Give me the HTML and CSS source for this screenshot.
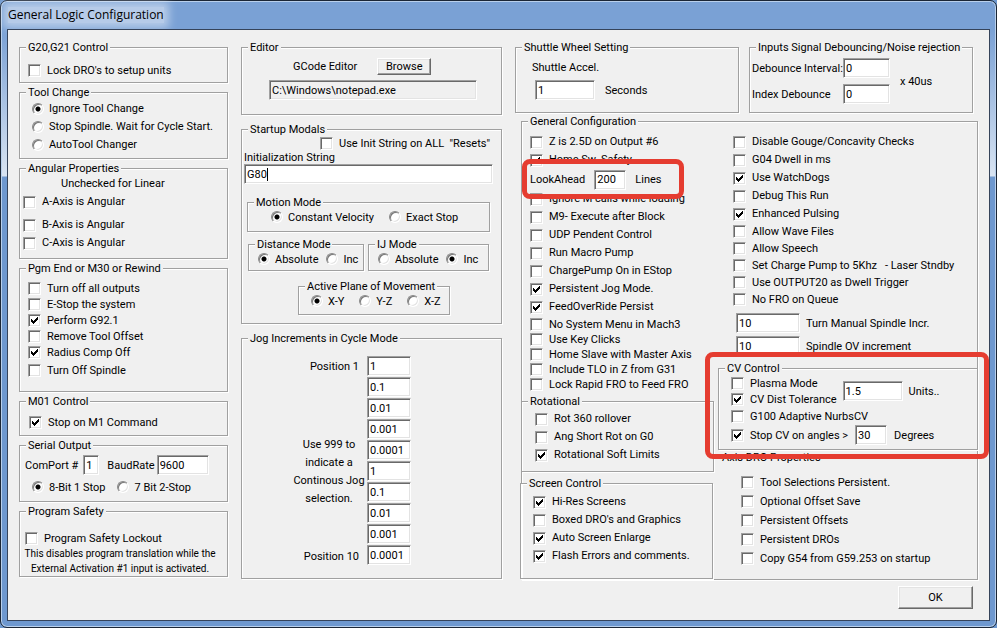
FILE: index.html
```html
<!DOCTYPE html>
<html lang="en">
<head>
    <meta charset="utf-8">
    <title>General Logic Configuration</title>
    <link rel="stylesheet" href="styles.css">
</head>
<body>
    <div class="window">
        <header class="titlebar">
            <h1>General Logic Configuration</h1>
        </header>

        <form class="client">
            <!-- Left column -->
            <div class="column">
                <fieldset class="units">
                    <legend>G20,G21 Control</legend>
                    <label class="check"><input type="checkbox">Lock DRO's to setup units</label>
                </fieldset>

                <fieldset class="tool-change roomy">
                    <legend>Tool Change</legend>
                    <label class="check"><input type="radio" name="tool" checked>Ignore Tool Change</label>
                    <label class="check"><input type="radio" name="tool">Stop Spindle. Wait for Cycle Start.</label>
                    <label class="check"><input type="radio" name="tool">AutoTool Changer</label>
                </fieldset>

                <fieldset class="angular roomy">
                    <legend>Angular Properties</legend>
                    <p>Unchecked for Linear</p>
                    <label class="check"><input type="checkbox">A-Axis is Angular</label>
                    <label class="check space"><input type="checkbox">B-Axis is Angular</label>
                    <label class="check"><input type="checkbox">C-Axis is Angular</label>
                </fieldset>

                <fieldset class="program-end">
                    <legend>Pgm End or M30 or Rewind</legend>
                    <label class="check"><input type="checkbox">Turn off all outputs</label>
                    <label class="check"><input type="checkbox">E-Stop the system</label>
                    <label class="check"><input type="checkbox" checked>Perform G92.1</label>
                    <label class="check"><input type="checkbox">Remove Tool Offset</label>
                    <label class="check"><input type="checkbox" checked>Radius Comp Off</label>
                    <label class="check last"><input type="checkbox">Turn Off Spindle</label>
                </fieldset>

                <fieldset class="m01">
                    <legend>M01 Control</legend>
                    <label class="check"><input type="checkbox" checked>Stop on M1 Command</label>
                </fieldset>

                <fieldset class="serial">
                    <legend>Serial Output</legend>
                    <div class="row">
                        <label for="comport">ComPort #</label>
                        <input type="text" class="w16" id="comport" value="1">
                        <label for="baud" class="baud">BaudRate</label>
                        <input type="text" class="w52" id="baud" value="9600">
                    </div>
                    <div class="row stop-bits">
                        <label class="check"><input type="radio" name="bits" checked>8-Bit 1 Stop</label>
                        <label class="check"><input type="radio" name="bits">7 Bit 2-Stop</label>
                    </div>
                </fieldset>

                <fieldset class="safety">
                    <legend>Program Safety</legend>
                    <label class="check"><input type="checkbox">Program Safety Lockout</label>
                    <p>This disables program translation while the<br>External Activation #1 input is activated.</p>
                </fieldset>
            </div>

            <!-- Middle column -->
            <div class="column middle">
                <fieldset class="editor">
                    <legend>Editor</legend>
                    <div class="row">
                        <label for="editor-path">GCode Editor</label>
                        <button type="button" class="browse">Browse</button>
                    </div>
                    <input type="text" class="path" id="editor-path" value="C:\Windows\notepad.exe" readonly>
                </fieldset>

                <fieldset class="startup">
                    <legend>Startup Modals</legend>
                    <label class="check resets"><input type="checkbox">Use Init String on ALL &nbsp;"Resets"</label>
                    <label class="init-label" for="init">Initialization String</label>
                    <div class="init-field">
                        <input type="text" id="init" value="G80">
                        <span class="caret"></span>
                    </div>

                    <fieldset class="motion">
                        <legend>Motion Mode</legend>
                        <div class="row">
                            <label class="check"><input type="radio" name="motion" checked>Constant Velocity</label>
                            <label class="check"><input type="radio" name="motion">Exact Stop</label>
                        </div>
                    </fieldset>
                    <div class="modes">
                        <fieldset>
                            <legend>Distance Mode</legend>
                            <div class="row">
                                <label class="check"><input type="radio" name="distance" checked>Absolute</label>
                                <label class="check"><input type="radio" name="distance">Inc</label>
                            </div>
                        </fieldset>
                        <fieldset>
                            <legend>IJ Mode</legend>
                            <div class="row">
                                <label class="check"><input type="radio" name="ij">Absolute</label>
                                <label class="check"><input type="radio" name="ij" checked>Inc</label>
                            </div>
                        </fieldset>
                    </div>
                    <fieldset class="plane">
                        <legend>Active Plane of Movement</legend>
                        <div class="row">
                            <label class="check"><input type="radio" name="plane" checked>X-Y</label>
                            <label class="check"><input type="radio" name="plane">Y-Z</label>
                            <label class="check"><input type="radio" name="plane">X-Z</label>
                        </div>
                    </fieldset>
                </fieldset>

                <fieldset class="jog">
                    <legend>Jog Increments in Cycle Mode</legend>
                    <div class="jog-body">
                        <div class="jog-labels">
                            <label for="jog1">Position 1</label>
                            <p>Use 999 to<br>indicate a<br>Continous Jog<br>selection.</p>
                            <label for="jog10">Position 10</label>
                        </div>
                        <div class="jog-values">
                            <input type="text" id="jog1" value="1">
                            <input type="text" aria-label="Position 2" value="0.1">
                            <input type="text" aria-label="Position 3" value="0.01">
                            <input type="text" aria-label="Position 4" value="0.001">
                            <input type="text" aria-label="Position 5" value="0.0001">
                            <input type="text" aria-label="Position 6" value="1">
                            <input type="text" aria-label="Position 7" value="0.1">
                            <input type="text" aria-label="Position 8" value="0.01">
                            <input type="text" aria-label="Position 9" value="0.001">
                            <input type="text" id="jog10" value="0.0001">
                        </div>
                    </div>
                </fieldset>
            </div>

            <!-- Right side -->
            <div class="right">
                <div class="top-groups">
                    <fieldset class="shuttle">
                        <legend>Shuttle Wheel Setting</legend>
                        <label for="accel">Shuttle Accel.</label>
                        <div class="row">
                            <input type="text" class="w60" id="accel" value="1">
                            <span>Seconds</span>
                        </div>
                    </fieldset>
                    <fieldset class="debounce">
                        <legend>Inputs Signal Debouncing/Noise rejection</legend>
                        <div class="debounce-body">
                            <div class="debounce-fields">
                                <label for="interval">Debounce Interval:</label>
                                <input type="text" id="interval" value="0">
                                <label for="index">Index Debounce</label>
                                <input type="text" id="index" value="0">
                            </div>
                            <span>x 40us</span>
                        </div>
                    </fieldset>
                </div>

                <fieldset class="general">
                    <legend>General Configuration</legend>
                    <div class="general-body">
                        <div class="general-left">
                            <div class="options roomy">
                                <label class="check"><input type="checkbox">Z is 2.5D on Output #6</label>
                                <label class="check"><input type="checkbox" checked>Home Sw. Safety</label>
                                <div class="row lookahead">
                                    <label for="lookahead">LookAhead</label>
                                    <input type="text" class="w32" id="lookahead" value="200">
                                    <span>Lines</span>
                                    <div class="marker"></div>
                                </div>
                                <label class="check"><input type="checkbox">Ignore M calls while loading</label>
                                <label class="check"><input type="checkbox">M9- Execute after Block</label>
                                <label class="check"><input type="checkbox">UDP Pendent Control</label>
                                <label class="check"><input type="checkbox">Run Macro Pump</label>
                                <label class="check"><input type="checkbox">ChargePump On in EStop</label>
                                <label class="check"><input type="checkbox" checked>Persistent Jog Mode.</label>
                                <label class="check"><input type="checkbox" checked>FeedOverRide Persist</label>
                            </div>
                            <div class="options tight">
                                <label class="check"><input type="checkbox">No System Menu in Mach3</label>
                                <label class="check"><input type="checkbox">Use Key Clicks</label>
                                <label class="check"><input type="checkbox">Home Slave with Master Axis</label>
                                <label class="check"><input type="checkbox">Include TLO in Z from G31</label>
                                <label class="check"><input type="checkbox">Lock Rapid FRO to Feed FRO</label>
                            </div>

                            <fieldset class="rotational roomy">
                                <legend>Rotational</legend>
                                <label class="check"><input type="checkbox">Rot 360 rollover</label>
                                <label class="check"><input type="checkbox">Ang Short Rot on G0</label>
                                <label class="check"><input type="checkbox" checked>Rotational Soft Limits</label>
                            </fieldset>

                            <fieldset class="screen roomy">
                                <legend>Screen Control</legend>
                                <label class="check"><input type="checkbox" checked>Hi-Res Screens</label>
                                <label class="check"><input type="checkbox">Boxed DRO's and Graphics</label>
                                <label class="check"><input type="checkbox" checked>Auto Screen Enlarge</label>
                                <label class="check"><input type="checkbox" checked>Flash Errors and comments.</label>
                            </fieldset>
                        </div>

                        <div class="general-right">
                            <div class="options roomy">
                                <label class="check"><input type="checkbox">Disable Gouge/Concavity Checks</label>
                                <label class="check"><input type="checkbox">G04 Dwell in ms</label>
                                <label class="check"><input type="checkbox" checked>Use WatchDogs</label>
                                <label class="check"><input type="checkbox">Debug This Run</label>
                                <label class="check"><input type="checkbox" checked>Enhanced Pulsing</label>
                            </div>
                            <div class="options snug">
                                <label class="check"><input type="checkbox">Allow Wave Files</label>
                                <label class="check"><input type="checkbox">Allow Speech</label>
                                <div class="row charge">
                                    <label class="check"><input type="checkbox">Set Charge Pump to 5Khz</label>
                                    <span>- Laser Stndby</span>
                                </div>
                                <label class="check"><input type="checkbox">Use OUTPUT20 as Dwell Trigger</label>
                                <label class="check"><input type="checkbox">No FRO on Queue</label>
                            </div>
                            <div class="spindle">
                                <div class="row">
                                    <input type="text" class="w64" id="spindle-incr" value="10">
                                    <label for="spindle-incr">Turn Manual Spindle Incr.</label>
                                </div>
                                <div class="row">
                                    <input type="text" class="w64" id="spindle-ov" value="10">
                                    <label for="spindle-ov">Spindle OV increment</label>
                                </div>
                            </div>

                            <div class="cv-area">
                                <fieldset class="cv">
                                    <legend>CV Control</legend>
                                    <div class="row tolerance">
                                        <div>
                                            <label class="check"><input type="checkbox">Plasma Mode</label>
                                            <label class="check"><input type="checkbox" checked>CV Dist Tolerance</label>
                                        </div>
                                        <input type="text" class="w60" aria-label="CV Dist Tolerance" value="1.5">
                                        <span>Units..</span>
                                    </div>
                                    <label class="check nurbs"><input type="checkbox">G100 Adaptive NurbsCV</label>
                                    <div class="row angles">
                                        <label class="check"><input type="checkbox" checked>Stop CV on angles &gt;</label>
                                        <input type="text" class="w32" aria-label="Stop CV angle" value="30">
                                        <span>Degrees</span>
                                    </div>
                                </fieldset>
                                <div class="marker"></div>
                            </div>

                            <h2>Axis DRO Properties</h2>
                            <div class="axis">
                                <label class="check"><input type="checkbox">Tool Selections Persistent.</label>
                                <label class="check"><input type="checkbox">Optional Offset Save</label>
                                <label class="check"><input type="checkbox">Persistent Offsets</label>
                                <label class="check"><input type="checkbox">Persistent DROs</label>
                                <label class="check"><input type="checkbox">Copy G54 from G59.253 on startup</label>
                            </div>
                        </div>
                    </div>
                </fieldset>

                <div class="footer">
                    <button type="button" class="ok">OK</button>
                </div>
            </div>
        </form>
    </div>
</body>
</html>
```
FILE: styles.css
```css
* {
    box-sizing: border-box;
}

body {
    margin: 0;
    background-color: #6e98cf;
    font-family: Roboto, "Liberation Sans", Arial, sans-serif;
    font-size: 11px;
    line-height: 13px;
    color: #000;
}

p {
    margin: 0;
}

/* Window frame */
.window {
    display: flex;
    flex-direction: column;
    min-height: 100vh;
    padding: 0 6px 6px;
    border: 1px solid #1b2636;
    border-radius: 7px;
    background: linear-gradient(#7aa1d5 29px, #d9e4f2 175px, #6e98cf 176px);
    box-shadow: inset 0 0 0 1px #b9d0ec;
    white-space: nowrap;
}

.titlebar {
    height: 28px;
    padding: 6px 1px;
}

.titlebar h1 {
    display: inline-block;
    margin: 0;
    font-family: "Open Sans", "Noto Sans", sans-serif;
    font-size: 12px;
    font-weight: 400;
    line-height: 16px;
    background-color: rgba(255, 255, 255, 0.45);
    box-shadow: 0 0 8px 5px rgba(255, 255, 255, 0.45);
}

.client {
    flex: 1;
    display: grid;
    grid-template-columns: minmax(0, 209fr) minmax(0, 261fr) minmax(0, 463fr);
    align-items: start;
    gap: 13px;
    padding: 11px;
    border: 1px solid #35435a;
    background-color: #f0f0f0;
}

.column {
    display: flex;
    flex-direction: column;
    gap: 3px;
}

.middle {
    gap: 8px;
}

/* Group boxes: --indent moves the content, the legend stays at the left */
fieldset {
    --indent: 0px;
    min-width: 0;
    margin: 0;
    padding: 0 0 0 var(--indent);
    border: 1px solid #a0a0a0;
    box-shadow: 1px 1px 0 #fff, inset 1px 1px 0 #fff;
}

legend {
    margin-left: calc(6px - var(--indent));
    padding: 0 2px;
    background-color: #f0f0f0;
}

/* Controls */
.row {
    display: flex;
    align-items: center;
}

.check {
    display: flex;
    align-items: center;
    height: 16px;
}

.roomy .check,
.angular p {
    height: 18px;
    line-height: 18px;
}

.snug .check {
    height: 17px;
}

.tight .check {
    height: 15px;
}

input,
button {
    margin: 0;
    font: inherit;
    color: inherit;
    border-radius: 0;
}

input[type="checkbox"],
input[type="radio"] {
    appearance: none;
    flex: none;
    background: #fff center no-repeat;
}

input[type="checkbox"] {
    width: 13px;
    height: 13px;
    margin-right: 6px;
    border: 1px solid;
    border-color: #a0a0a0 #fff #fff #a0a0a0;
    box-shadow: inset 1px 1px 0 #696969, inset -1px -1px 0 #e3e3e3;
}

input[type="checkbox"]:checked {
    background-image: url("data:image/svg+xml,%3Csvg xmlns='http://www.w3.org/2000/svg' width='7' height='7' shape-rendering='crispEdges'%3E%3Cpath d='M0 2h1v3h-1zM1 3h1v3h-1zM2 4h1v3h-1zM3 3h1v3h-1zM4 2h1v3h-1zM5 1h1v3h-1zM6 0h1v3h-1z'/%3E%3C/svg%3E");
}

input[type="radio"] {
    width: 12px;
    height: 12px;
    margin-right: 5px;
    border: 1px solid;
    border-color: #888 #fff #fff #888;
    border-radius: 50%;
    box-shadow: inset 1px 1px 0 #777, inset -1px -1px 0 #e3e3e3;
}

input[type="radio"]:checked {
    background-image: radial-gradient(circle, #000 2px, transparent 3px);
}

input[type="text"] {
    width: 44px;
    height: 20px;
    padding: 0 2px;
    border: 1px solid;
    border-color: #a0a0a0 #fff #fff #a0a0a0;
    background-color: #fff;
    box-shadow: inset 1px 1px 0 #696969, inset -1px -1px 0 #e3e3e3;
    outline: none;
}

input.w16 {
    width: 16px;
}

input.w32 {
    width: 32px;
}

input.w52 {
    width: 52px;
}

input.w60 {
    width: 60px;
}

input.w64 {
    width: 64px;
}

button {
    padding: 0;
    border: 1px solid;
    border-color: #fff #696969 #696969 #fff;
    background-color: #f0f0f0;
    box-shadow: inset -1px -1px 0 #a0a0a0, inset 1px 1px 0 #e3e3e3;
}

.marker {
    position: absolute;
    z-index: 1;
    border: 5px solid #e53c30;
    border-radius: 8px;
    pointer-events: none;
}

/* Left column groups */
.units {
    --indent: 8px;
    padding: 8px 8px 4px var(--indent);
}

.tool-change {
    --indent: 12px;
    padding: 1px 0 4px var(--indent);
}

.angular {
    --indent: 3px;
    padding: 0 3px 6px var(--indent);
}

.angular p {
    padding-left: 38px;
}

.check.space {
    margin-top: 5px;
}

.program-end {
    --indent: 8px;
    padding: 5px 8px 13px var(--indent);
}

.check.last {
    margin-top: 2px;
}

.m01 {
    --indent: 9px;
    padding: 6px 9px 5px var(--indent);
}

.serial {
    --indent: 5px;
    padding: 3px 5px 5px var(--indent);
}

.serial .w16 {
    margin-left: 5px;
}

.baud {
    margin: 0 2px 0 8px;
}

.stop-bits {
    gap: 12px;
    height: 18px;
    margin: 3px 0 0 7px;
}

.safety {
    padding-top: 12px;
}

.safety .check {
    margin-left: 5px;
}

.safety p {
    padding-right: 7px;
    font-size: 10px;
    line-height: 15px;
    text-align: center;
}

/* Middle column groups */
.editor {
    --indent: 27px;
    padding: 4px 24px 14px var(--indent);
}

.editor .row {
    gap: 20px;
    padding-left: 24px;
}

.browse {
    width: 54px;
    height: 17px;
}

input.path {
    display: block;
    width: 100%;
    margin-top: 5px;
    background-color: #f0f0f0;
}

.startup {
    --indent: 2px;
    padding: 0 8px 8px var(--indent);
}

.check.resets {
    justify-content: flex-end;
    height: 15px;
    padding-right: 3px;
}

.init-label {
    display: block;
}

.init-field {
    position: relative;
}

.init-field input {
    display: block;
    width: 100%;
}

.caret {
    position: absolute;
    top: 4px;
    left: 23px;
    width: 1px;
    height: 13px;
    background-color: #000;
}

.motion {
    --indent: 23px;
    margin: 12px 3px 6px;
    padding: 0 0 6px var(--indent);
}

.motion .row {
    gap: 15px;
}

.modes {
    display: grid;
    grid-template-columns: minmax(0, 116fr) minmax(0, 121fr);
    gap: 4px;
    margin: 0 4px;
}

.modes fieldset {
    --indent: 9px;
    padding-bottom: 3px;
}

.modes .row {
    gap: 8px;
}

.plane {
    --indent: 12px;
    width: 152px;
    margin: 9px 0 0 54px;
    padding: 0 0 5px var(--indent);
}

.plane .row {
    gap: 15px;
}

.jog {
    --indent: 51px;
    padding: 11px 0 13px var(--indent);
}

.jog-body {
    display: flex;
    gap: 2px;
}

.jog-labels {
    display: flex;
    flex-direction: column;
    justify-content: space-between;
    width: 72px;
    padding: 4px 0 2px;
    text-align: right;
}

.jog-labels label {
    padding-right: 6px;
}

.jog-labels p {
    padding-top: 20px;
    line-height: 18px;
    text-align: center;
}

.jog-values {
    display: flex;
    flex-direction: column;
    gap: 1px;
}

/* Right side groups */
.right {
    display: flex;
    flex-direction: column;
    gap: 2px;
}

.top-groups {
    display: grid;
    grid-template-columns: minmax(0, 1fr) minmax(0, 1fr);
    gap: 10px;
    padding-right: 5px;
}

.shuttle {
    --indent: 16px;
    padding: 6px 0 12px var(--indent);
}

.shuttle label {
    display: block;
    height: 20px;
    line-height: 16px;
}

.shuttle .row {
    gap: 10px;
    padding-left: 3px;
}

.debounce {
    --indent: 2px;
    padding: 4px 0 8px var(--indent);
}

.debounce-body {
    display: flex;
    align-items: center;
    gap: 10px;
}

.debounce-fields {
    display: grid;
    grid-template-columns: 91px 47px;
    align-items: center;
    row-gap: 6px;
}

.debounce-fields input[type="text"] {
    width: 100%;
}

.general {
    margin-left: 6px;
}

.general-body {
    display: grid;
    grid-template-columns: minmax(0, 192fr) minmax(0, 263fr);
}

.general-left {
    padding-top: 5px;
}

.general-left .options {
    padding-left: 8px;
}

.general-left .tight {
    padding-top: 1px;
}

.lookahead {
    position: relative;
    height: 21px;
    gap: 9px;
}

.lookahead .marker {
    top: -10px;
    right: 30px;
    bottom: -9px;
    left: -8px;
}

.rotational {
    --indent: 13px;
    margin: 3px 0 0 -1px;
    padding: 2px 0 7px var(--indent);
}

.screen {
    --indent: 12px;
    margin: 5px 1px 0 -2px;
    padding: 3px 0 13px var(--indent);
}

.general-right {
    padding-top: 5px;
}

.general-right .options {
    padding-left: 19px;
}

.charge {
    gap: 8px;
}

.spindle {
    display: flex;
    flex-direction: column;
    gap: 3px;
    padding: 5px 0 6px 22px;
}

.spindle .row {
    gap: 6px;
}

.cv-area {
    position: relative;
    margin: 0 -1px 0 4px;
}

.cv-area .marker {
    top: -10px;
    right: -11px;
    bottom: -9px;
    left: -13px;
}

.cv {
    --indent: 12px;
    padding: 0 0 4px var(--indent);
}

.tolerance {
    gap: 6px;
}

.cv .nurbs {
    height: 18px;
}

.angles {
    gap: 7px;
}

h2 {
    margin: 1px 0 9px 8px;
    font-size: 11px;
    font-weight: 400;
}

.axis {
    padding-left: 27px;
}

.axis .check {
    height: 19px;
}

.footer {
    display: flex;
    justify-content: flex-end;
    padding: 4px 5px 0 0;
}

.ok {
    width: 75px;
    height: 23px;
}
```
